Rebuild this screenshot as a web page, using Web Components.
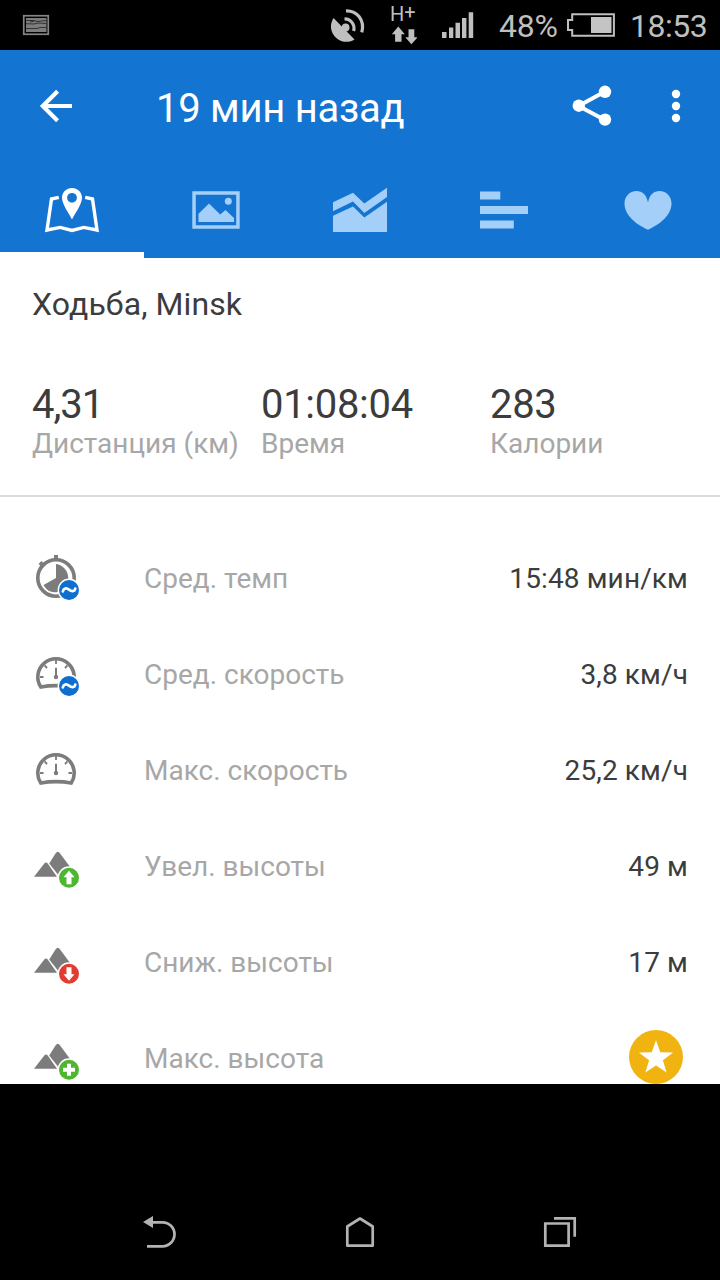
<!DOCTYPE html>
<html lang="ru">
<head>
<meta charset="utf-8">
<title>Тренировка</title>
<style>
html,body{margin:0;padding:0;background:#000}
body{width:720px;height:1280px;overflow:hidden;font-family:Roboto,"Noto Sans",sans-serif}
</style>
</head>
<body>
<workout-app></workout-app>
<script>
function define(name, css, html) {
  const t = document.createElement('template');
  t.innerHTML = `<style>*{box-sizing:border-box}svg{display:block;flex:none}${css}</style>${html}`;
  customElements.define(name, class extends HTMLElement {
    constructor() {
      super();
      this.attachShadow({ mode: 'open' }).append(t.content.cloneNode(true));
    }
  });
}

define('status-bar', `
:host{display:flex;height:50px;background:#000;color:#bfbfbf;font-size:32px;line-height:52px;white-space:nowrap}
.sp{flex:1}
.net{width:25px;height:50px;margin-left:25px}
.h{display:flex;align-items:flex-start;font-size:20px;line-height:28px;height:26px;margin-left:-1px}
.h i{font-style:normal;line-height:24px}
.pct{width:68px;letter-spacing:-.2px}
.time{width:90px;letter-spacing:-.5px}
`, `
<svg width="60" height="50" viewBox="0 0 60 50"><rect x="23.75" y="15.75" width="24.5" height="18.5" fill="none" stroke="#858585" stroke-width="1.7"/><rect x="26" y="18" width="20.500" height="14" fill="#7d7d7d"/><path d="M26 20.500h8l3 1 9-1M26 23.700l8 .3 4-1 8 .5M30 22l4-.8M26 28.500h11l3-1h6" stroke="#333" stroke-width="1" fill="none"/></svg>
<span class="sp"></span>
<svg width="36" height="50" viewBox="330 0 36 50"><path d="M333.500 18C328 27 332 36 339 40C344 43 351 42 354.500 39.500Z" fill="#bfbfbf"/><circle cx="345.600" cy="27.500" r="3.900" fill="#bfbfbf"/><g fill="none" stroke="#bfbfbf" stroke-width="3.200"><path d="M344.500 18.800A9.500 9.500 0 0 1 353.600 31"/><path d="M346 10.800C357 10.500 365 20 361.800 32.400"/></g></svg>
<div class="net"><div class="h"><span>H</span><i>+</i></div><svg width="26" height="24" viewBox="391 26 26 24" fill="#bfbfbf"><path d="M398.300 26.500l6.500 7.700h-3.300v7.600h-6.400v-7.600h-3.300zM411.400 44.300l-6.100-7h3.200v-8.100h5.800v8.100h3.300z"/></svg></div>
<svg width="83" height="50" viewBox="416 0 83 50" fill="#bfbfbf"><path d="M442 32h4.500v6H442zM449 27.500h4.300V38H449zM455.500 22.700h4.500V38h-4.500zM462 18h4.400v20H462zM468.700 12.300h4.500V38h-4.500z"/></svg>
<span class="pct">48%</span>
<svg width="63" height="50" viewBox="567 0 63 50"><path d="M572.200 14.200h41.700v21.600h-41.700V30H568V20h4.200z" fill="none" stroke="#bfbfbf" stroke-width="2" /><rect x="591" y="17" width="20.500" height="16" fill="#c4c4c4"/></svg>
<span class="time">18:53</span>
`);

define('app-bar', `
:host{display:flex;height:112px;color:#fff}
h1{margin:0;flex:1;padding-left:12px;font-weight:400;font-size:40px;line-height:117px;white-space:nowrap;letter-spacing:-.28px}
`, `
<svg width="144" height="112" viewBox="0 50 144 112" fill="none" stroke="#fff" stroke-width="4.200"><path d="M72 106H43M57.600 91.200L42.800 106l14.800 14.800"/></svg>
<h1><slot></slot></h1>
<svg width="160" height="112" viewBox="560 50 160 112" fill="#fff"><path d="M605 91.500L578.500 106l26.500 14" fill="none" stroke="#fff" stroke-width="4"/><circle cx="605" cy="91.800" r="6.200"/><circle cx="578.800" cy="105.700" r="6.200"/><circle cx="605" cy="119.600" r="6.200"/><circle cx="676" cy="94" r="4.200"/><circle cx="676" cy="106" r="4.200"/><circle cx="676" cy="118" r="4.200"/></svg>
`);

define('tab-item', `
:host{display:flex;flex-direction:column;width:144px;height:96px;color:#a3cff8}
:host([active]){color:#fff;border-bottom:6px solid #fff}
`, `<slot></slot>`);

define('tab-strip', `
:host{display:flex;height:96px}
tab-item svg{height:90px}
`, `
<tab-item active><svg width="144" height="90" viewBox="0 162 144 90"><path fill="#fff" fill-rule="evenodd" d="M72 188c-5.600 0-10 4.300-10 9.800 0 6.600 6.800 15.200 10 21.700 3.200-6.500 10-15.100 10-21.700 0-5.500-4.400-9.800-10-9.800zm0 4.900a4.900 4.900 0 1 1 0 9.800a4.900 4.900 0 0 1 0-9.800z"/><path d="M58.800 197.300l-7.300 1.700-4.500 31 13.200-2.600 11.800 3 11.800-3 13.200 2.600-4.500-31-7.300-1.700" fill="none" stroke="#fff" stroke-width="3.400"/></svg></tab-item>
<tab-item><svg width="144" height="90" viewBox="144 162 144 90" fill="#a3cff8"><path fill-rule="evenodd" d="M192.300 191.300h47.400v37.400h-47.400zm3.500 3.500v30.400h40.400v-30.400z"/><path d="M198.500 222v-8.300l10.500-10.200 11.200 11 5.300-4.500 8.500 8v4z"/><circle cx="228.300" cy="201.300" r="3.500"/></svg></tab-item>
<tab-item><svg width="144" height="90" viewBox="288 162 144 90" fill="#a3cff8"><path d="M333 202.300l20-9.600 11.300 10.900 22.700-15.800v9.300l-22.700 15.800-11.300-11.300-20 9.600z"/><path d="M333 215.800l20-9.300 11.300 11 22.700-15.800V232h-54z"/></svg></tab-item>
<tab-item><svg width="144" height="90" viewBox="432 162 144 90" fill="#a3cff8"><path d="M480 191.500h20.300v8H480zM480 206h48v8h-48zM480 220.500h33.800v8H480z"/></svg></tab-item>
<tab-item><svg width="144" height="90" viewBox="576 162 144 90" fill="#a3cff8"><path d="M648 202.500C646.500 194.500 642 191 636.700 191C629.500 191 624.500 196.500 624.500 203.500C624.500 215 636 224.500 648 229.700C660 224.500 671.500 215 671.500 203.500C671.500 196.500 666.500 191 659.500 191C654 191 649.500 194.500 648 202.500Z"/></svg></tab-item>
`);

define('stat-cell', `
:host{display:block;white-space:nowrap}
.v{font-size:40px;line-height:48px;color:#3c3c3c;letter-spacing:-.3px}
:host([tight]) .v{letter-spacing:-1px}
.l{font-size:28px;line-height:34px;color:#a7a7a7;margin-top:-2px}
`, `<div class="v"><slot></slot></div><div class="l"><slot name="label"></slot></div>`);

define('workout-summary', `
:host{display:block;height:239px;border-bottom:2px solid #dcdcdc;padding:26px 32px 0;color:#3c3c3c}
h2{margin:0;font-weight:400;font-size:32px;line-height:40px;letter-spacing:.08px}
.g{display:grid;grid-template-columns:repeat(3,229px);margin-top:57px}
`, `
<h2><span>Ходьба, Minsk</span></h2>
<div class="g">
<stat-cell tight><span>4,31</span><span slot="label">Дистанция (км)</span></stat-cell>
<stat-cell><span>01:08:04</span><span slot="label">Время</span></stat-cell>
<stat-cell><span>283</span><span slot="label">Калории</span></stat-cell>
</div>`);

define('metric-row', `
:host{display:flex;flex:none;height:96px;line-height:98px;font-size:28px;white-space:nowrap;padding-right:32px;color:#a7a7a7}
.ic{width:144px;height:96px;flex:none}
.l{flex:1}
.v{color:#3c3c3c;letter-spacing:.12px}
`, `<div class="ic"><slot name="icon"></slot></div><div class="l"><slot></slot></div><div class="v"><slot name="value"></slot></div>`);

const wave = '<circle cx="69" cy="60" r="11.400" fill="#fff"/><circle cx="69" cy="60" r="10" fill="#0f6fd0"/><path d="M62.800 61.500C63.500 58 66.500 57.600 69 59.600S74.500 62 75.300 58.500" fill="none" stroke="#fff" stroke-width="2.700" stroke-linecap="round"/>';
const gauge = '<g fill="none" stroke="#7c7c7c"><path d="M40.800 61A18.200 18.200 0 1 1 71.200 61Q56 58.300 40.800 61Z" stroke-width="3.600"/><path d="M56 33v5M40 51h3.500M68.500 51h3.500M44.600 39.500l2.500 2.500M67.400 39.500L64.900 42" stroke-width="1.800"/><path d="M56 41.800v9" stroke-width="2"/></g><circle cx="56" cy="51" r="2.200" fill="#7c7c7c"/>';
const hills = '<path d="M49.200 45.400L55.500 35.400q2.300-3.200 4.600 0L70.500 49.500 66 58.500H59.500zM34 58.700L44.300 45.600q1.700-2 3.400 0L57 58.700z" fill="#7c7c7c"/>';
const badge = (c, p) => `<circle cx="69" cy="59.800" r="11.500" fill="#fff"/><circle cx="69" cy="59.800" r="10" fill="${c}"/><path transform="translate(0 11.800)" d="${p}" fill="#fff"/>`;
const icon = s => `<svg slot="icon" width="144" height="96" viewBox="0 0 144 96">${s}</svg>`;
const hill = b => icon(hills + b);

define('metric-list', `
:host{display:flex;flex-direction:column;height:587px;padding-top:33px;overflow:hidden;position:relative}
metric-row svg{display:block}
.fab{position:absolute;left:628px;top:532px}
`, `
<metric-row>${icon('<circle cx="56" cy="48" r="18.200" fill="none" stroke="#7c7c7c" stroke-width="3.600"/><path d="M56 34V48L43.500 55C47 61 51 62.300 56 62.300A14.300 14.300 0 0 0 56 34Z" fill="#7c7c7c"/><path d="M56 25v5M40 32.500l4 4" stroke="#7c7c7c" stroke-width="4"/>' + wave)}<span>Сред. темп</span><span slot="value">15:48 мин/км</span></metric-row>
<metric-row>${icon(gauge + wave)}<span>Сред. скорость</span><span slot="value">3,8 км/ч</span></metric-row>
<metric-row>${icon(gauge)}<span>Макс. скорость</span><span slot="value">25,2 км/ч</span></metric-row>
<metric-row>${hill(badge('#4fb72f', 'M69 41l5.500 6.500h-3v7h-5v-7h-3z'))}<span>Увел. высоты</span><span slot="value">49 м</span></metric-row>
<metric-row>${hill(badge('#e23b30', 'M69 55l-5.500-6.500h3v-7h5v7h3z'))}<span>Сниж. высоты</span><span slot="value">17 м</span></metric-row>
<metric-row>${hill(badge('#4fb72f', 'M67 42h4v4h4v4h-4v4h-4v-4h-4v-4h4z'))}<span>Макс. высота</span></metric-row>
<svg class="fab" width="56" height="56" viewBox="628 1029 56 56"><circle cx="656" cy="1057" r="27" fill="#f1b30f"/><path d="M656 1040.300l4.300 11.900 12.900.3-10.300 7.800 3.700 12.300-10.600-7.200-10.600 7.200 3.700-12.300-10.300-7.800 12.900-.3z" fill="#fff"/></svg>
`);

define('nav-bar', `
:host{display:flex;justify-content:center;height:96px;margin-top:100px}
`, `
<svg width="200" height="96" viewBox="60 1184 200 96"><path d="M153 1222.300h9.500a12 12 0 0 1 0 24H147" fill="none" stroke="#b3b3b3" stroke-width="2.700"/><path d="M143 1222l10-6v12z" fill="#b3b3b3"/></svg>
<svg width="200" height="96" viewBox="260 1184 200 96"><path d="M347.300 1245.700v-19.200l12.700-8 12.700 8v19.200z" fill="none" stroke="#b3b3b3" stroke-width="2.700" stroke-linejoin="round"/></svg>
<svg width="200" height="96" viewBox="460 1184 200 96"><path d="M545.300 1223.500h23.300v22.200h-23.300zM554 1218.300h20.700v18.500" fill="none" stroke="#b3b3b3" stroke-width="2.700"/></svg>
`);

define('workout-app', `
:host{display:block;width:720px;height:1280px;background:#000}
header{background:#1474d2;height:208px}
main{background:#fff;height:826px}
`, `
<status-bar></status-bar>
<header><app-bar><span>19 мин назад</span></app-bar><tab-strip></tab-strip></header>
<main><workout-summary></workout-summary><metric-list></metric-list></main>
<nav-bar></nav-bar>
`);
</script>
</body>
</html>
